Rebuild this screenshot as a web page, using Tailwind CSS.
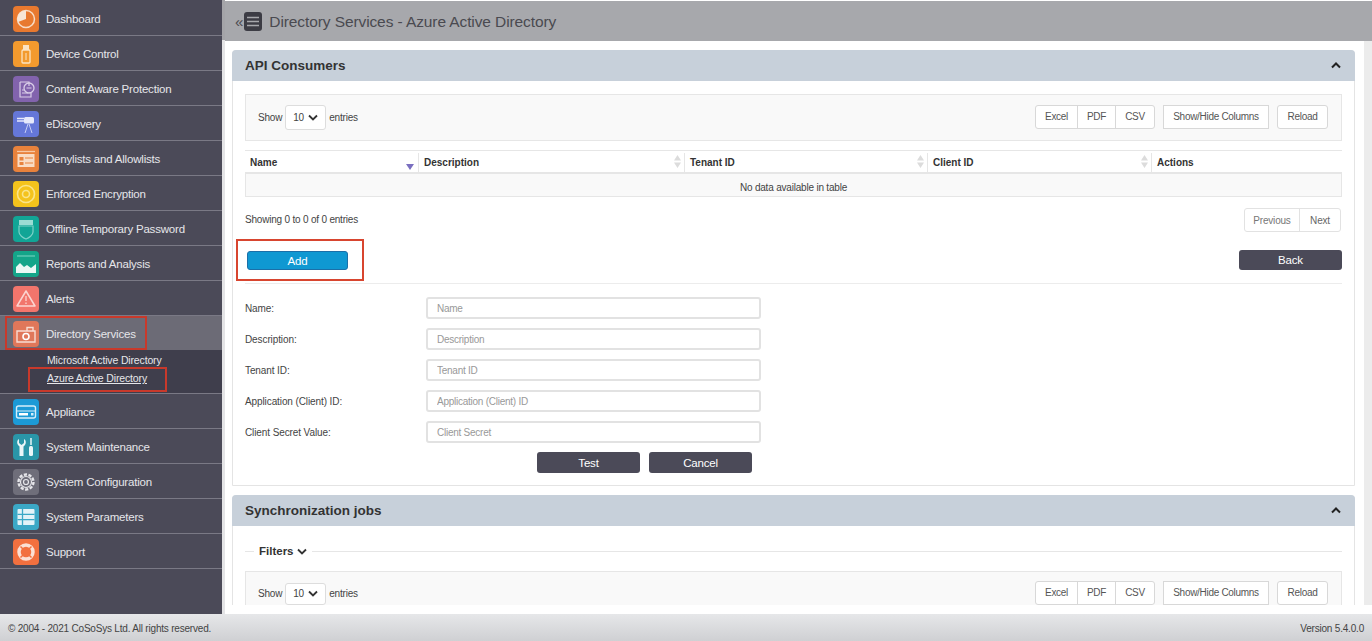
<!DOCTYPE html>
<html lang="en">
  <head>
    <meta charset="UTF-8" />
    <meta name="viewport" content="width=device-width, initial-scale=1.0" />
    <title>Directory Services - Azure Active Directory</title>
    <script src="https://cdn.jsdelivr.net/npm/@tailwindcss/browser@4"></script>
  </head>
  <body class="bg-white h-[641px] w-[1372px] overflow-hidden font-['Liberation_Sans',Arial,sans-serif] text-[#444]">
    <div class="flex flex-col h-[641px]">
      <div class="flex h-[614px]">
        <!-- sidebar -->
        <aside class="relative w-[225px] shrink-0 bg-[#4b4a58] pt-px border-r-[3px] border-[#e4e4e6] text-[11.500px] tracking-[-0.2px] text-[#e6e6ea] [&>a>span]:pt-[2px]">
          <div class="absolute right-[-3px] top-0 w-[3px] h-[40px] bg-[#a4a4a8]"></div>

          <a class="flex items-center h-[35px] pt-[2px] pl-[13px] gap-[7px] border-b border-[#7a7985]">
            <svg width="26" height="26" viewBox="0 0 26 26" class="shrink-0"><rect width="26" height="26" rx="4" fill="#e8792f"/><circle cx="13" cy="13" r="8.500" fill="none" stroke="#f7dcc6" stroke-width="1.500"/><path d="M13 13 L13 4.500 A8.500 8.500 0 0 0 5 16 Z" fill="#f7e6d6"/></svg>
            <span>Dashboard</span>
          </a>
          <a class="flex items-center h-[35px] pt-[2px] pl-[13px] gap-[7px] border-b border-[#7a7985]">
            <svg width="26" height="26" viewBox="0 0 26 26" class="shrink-0"><rect width="26" height="26" rx="4" fill="#f29a2e"/><rect x="10" y="4" width="6" height="5" fill="#fbe3c2"/><rect x="9" y="9" width="8" height="13" rx="1" fill="none" stroke="#fbe3c2" stroke-width="1.300"/><path d="M13 12v7" stroke="#fbe3c2"/></svg>
            <span>Device Control</span>
          </a>
          <a class="flex items-center h-[35px] pt-[2px] pl-[13px] gap-[7px] border-b border-[#7a7985]">
            <svg width="26" height="26" viewBox="0 0 26 26" class="shrink-0"><rect width="26" height="26" rx="4" fill="#8263ad"/><path d="M7 6h9v4M7 6v15h11v-4" fill="none" stroke="#d9cde8" stroke-width="1.200"/><circle cx="16" cy="12" r="5" fill="none" stroke="#d9cde8" stroke-width="1.300"/><path d="M13.500 12h5M9 14h3M9 17h6" stroke="#d9cde8"/></svg>
            <span>Content Aware Protection</span>
          </a>
          <a class="flex items-center h-[35px] pt-[2px] pl-[13px] gap-[7px] border-b border-[#7a7985]">
            <svg width="26" height="26" viewBox="0 0 26 26" class="shrink-0"><rect width="26" height="26" rx="4" fill="#6577d8"/><path d="M4 7.500h7M4 10h7" stroke="#e6e9fb" stroke-width="1.500"/><rect x="11" y="6" width="10" height="6.500" rx="1.500" fill="#e6e9fb"/><path d="M15 13l-3 9M16 13l3 9" stroke="#c6cdf4"/></svg>
            <span>eDiscovery</span>
          </a>
          <a class="flex items-center h-[35px] pt-[2px] pl-[13px] gap-[7px] border-b border-[#7a7985]">
            <svg width="26" height="26" viewBox="0 0 26 26" class="shrink-0"><rect width="26" height="26" rx="4" fill="#e8823c"/><path d="M4 5.500h18" stroke="#f6c9a6" stroke-width="1.300"/><rect x="4.500" y="8" width="17" height="13" fill="#f9dcc4"/><rect x="6.500" y="11" width="4" height="3.500" fill="#e8823c"/><rect x="6.500" y="16" width="4" height="3" fill="#e8823c"/><path d="M12 12h8M12 17h8" stroke="#e8823c"/></svg>
            <span>Denylists and Allowlists</span>
          </a>
          <a class="flex items-center h-[35px] pt-[2px] pl-[13px] gap-[7px] border-b border-[#7a7985]">
            <svg width="26" height="26" viewBox="0 0 26 26" class="shrink-0"><rect width="26" height="26" rx="4" fill="#f4c31c"/><circle cx="13" cy="13" r="8.500" fill="none" stroke="#fae48a" stroke-width="1.600"/><circle cx="13" cy="13" r="3.500" fill="none" stroke="#fae48a" stroke-width="1.600"/></svg>
            <span>Enforced Encryption</span>
          </a>
          <a class="flex items-center h-[35px] pt-[2px] pl-[13px] gap-[7px] border-b border-[#7a7985]">
            <svg width="26" height="26" viewBox="0 0 26 26" class="shrink-0"><rect width="26" height="26" rx="4" fill="#12a596"/><rect x="6" y="4" width="14" height="5" fill="#9adcd4"/><path d="M6 10h14v6c0 3-4 6-7 7-3-1-7-4-7-7z" fill="none" stroke="#7dd2c8" stroke-width="1.200"/></svg>
            <span>Offline Temporary Password</span>
          </a>
          <a class="flex items-center h-[35px] pt-[2px] pl-[13px] gap-[7px] border-b border-[#7a7985]">
            <svg width="26" height="26" viewBox="0 0 26 26" class="shrink-0"><rect width="26" height="26" rx="4" fill="#14a589"/><path d="M4 5h18" stroke="#7fd6c4"/><path d="M3 22v-6l4-4 4 4 3-2 4 3 5-4v9z" fill="#eaf8f4"/></svg>
            <span>Reports and Analysis</span>
          </a>
          <a class="flex items-center h-[35px] pt-[2px] pl-[13px] gap-[7px] border-b border-[#7a7985]">
            <svg width="26" height="26" viewBox="0 0 26 26" class="shrink-0"><rect width="26" height="26" rx="4" fill="#f2756c"/><path d="M13 5l9 15H4z" fill="none" stroke="#fbd5d1" stroke-width="1.500" stroke-linejoin="round"/><path d="M13 10v5M13 16.500v1.500" stroke="#fbd5d1" stroke-width="1.300"/></svg>
            <span>Alerts</span>
          </a>
          <a class="flex items-center h-[34px] pt-[2px] pl-[13px] gap-[7px] bg-[#6c6b76]">
            <svg width="26" height="26" viewBox="0 0 26 26" class="shrink-0"><rect width="26" height="26" rx="4" fill="#e0775a"/><path d="M4 10h18v11H4zM14 10V6.500h6V10" fill="none" stroke="#f8dcd2" stroke-width="1.400"/><circle cx="13" cy="15.500" r="3" fill="none" stroke="#fff" stroke-width="1.600"/></svg>
            <span>Directory Services</span>
          </a>
          <div class="h-[44px] bg-[#3f3e4c] pl-[47px] pt-[1px] text-[10.500px] tracking-[-0.15px] leading-[18px] border-b border-[#7a7985]">
            <a class="block h-[18px]">Microsoft Active Directory</a>
            <a class="block underline">Azure Active Directory</a>
          </div>
          <a class="flex items-center h-[35px] pt-[2px] pl-[13px] gap-[7px] border-b border-[#7a7985]">
            <svg width="26" height="26" viewBox="0 0 26 26" class="shrink-0"><rect width="26" height="26" rx="4" fill="#1c9ad6"/><rect x="3.500" y="7" width="19" height="12" rx="2" fill="none" stroke="#d5eefa" stroke-width="1.400"/><path d="M3.500 12h19" stroke="#d5eefa"/><rect x="6" y="14" width="9" height="2.500" fill="#fff"/><rect x="18" y="14" width="2.500" height="2.500" fill="#d5eefa"/></svg>
            <span>Appliance</span>
          </a>
          <a class="flex items-center h-[35px] pt-[2px] pl-[13px] gap-[7px] border-b border-[#7a7985]">
            <svg width="26" height="26" viewBox="0 0 26 26" class="shrink-0"><rect width="26" height="26" rx="4" fill="#2a96a8"/><path d="M6 5v4l2.500 2L11 9V5c2 1 2.500 4 1 6l-1.500 1.500V22h-4v-9.500L5 11C3.500 9 4 6 6 5z" fill="#eaf6f8"/><path d="M18 4v7" stroke="#eaf6f8" stroke-width="1.500"/><rect x="16" y="12" width="4" height="10" rx="1.500" fill="#eaf6f8"/></svg>
            <span>System Maintenance</span>
          </a>
          <a class="flex items-center h-[35px] pt-[2px] pl-[13px] gap-[7px] border-b border-[#7a7985]">
            <svg width="26" height="26" viewBox="0 0 26 26" class="shrink-0"><rect width="26" height="26" rx="4" fill="#6f6e7a"/><circle cx="13" cy="13" r="7.500" fill="none" stroke="#e6e6ea" stroke-width="2.400" stroke-dasharray="3.200 1.500"/><circle cx="13" cy="13" r="5.500" fill="none" stroke="#e6e6ea" stroke-width="1.200"/><circle cx="13" cy="13" r="2.500" fill="none" stroke="#e6e6ea" stroke-width="1.200"/></svg>
            <span>System Configuration</span>
          </a>
          <a class="flex items-center h-[35px] pt-[2px] pl-[13px] gap-[7px] border-b border-[#7a7985]">
            <svg width="26" height="26" viewBox="0 0 26 26" class="shrink-0"><rect width="26" height="26" rx="4" fill="#3ba8c6"/><rect x="4.500" y="5" width="17" height="16" rx="1" fill="#e3f3f8"/><path d="M4.500 10.300h17M4.500 15.600h17M9.500 5v16" stroke="#3ba8c6" stroke-width="1.300"/></svg>
            <span>System Parameters</span>
          </a>
          <a class="flex items-center h-[35px] pt-[2px] pl-[13px] gap-[7px] border-b border-[#7a7985]">
            <svg width="26" height="26" viewBox="0 0 26 26" class="shrink-0"><rect width="26" height="26" rx="4" fill="#f2703f"/><circle cx="13" cy="13" r="7" fill="none" stroke="#fbe0d4" stroke-width="3.500"/><path d="M7.500 7.500l3 3M18.500 7.500l-3 3M7.500 18.500l3-3M18.500 18.500l-3-3" stroke="#f2703f" stroke-width="1.500"/></svg>
            <span>Support</span>
          </a>

          <!-- highlights drawn on the screenshot -->
          <div class="absolute left-[5px] top-[316px] w-[142px] h-[34px] border-2 border-[#c8392b]"></div>
          <div class="absolute left-[28px] top-[367px] w-[139px] h-[25px] border-2 border-[#c8392b]"></div>
        </aside>

        <!-- main -->
        <div class="flex-1 min-w-0 flex flex-col">
          <header class="h-[40px] mt-px shrink-0 bg-[#a7a8ac] flex items-center pl-[10px] text-[#4a4a50]">
            <span class="text-[15px] leading-none mr-px">«</span>
            <svg width="18" height="19" viewBox="0 0 18 19" class="shrink-0"><rect width="18" height="19" rx="3" fill="#3c3c44"/><path d="M3 5.500h12M3 9.500h12M3 13.500h12" stroke="#a7a8ac" stroke-width="1.300"/></svg>
            <h1 class="ml-[7px] pt-[2px] text-[15.500px] tracking-[-0.1px] font-normal">Directory Services - Azure Active Directory</h1>
          </header>

          <div class="flex-1 min-h-0 flex">
            <div class="flex-1 min-w-0 h-[564px] overflow-hidden pl-[7px] pr-[9px] pt-[9px]">
              <!-- API Consumers -->
              <section class="relative h-[436px] border border-[#e4e4e4] rounded-t-[4px]">
                <div class="h-[31px] -mx-px -mt-px bg-[#c7d0da] rounded-t-[4px] flex items-center justify-between pl-[13px] pr-[14px]">
                  <h2 class="pt-[2px] text-[13.500px] font-bold text-[#333]">API Consumers</h2>
                  <svg width="10" height="7" viewBox="0 0 10 7"><path d="M1 5.500l4-4 4 4" fill="none" stroke="#222" stroke-width="2"/></svg>
                </div>
                <div class="px-[12px] pt-[13px]">
                  <div class="h-[47px] bg-[#f9f9f9] border border-[#e6e6e6] flex items-center justify-between pl-[12px] pr-[13px] text-[10px] tracking-[-0.2px]">
                    <div class="flex items-center gap-[3px]">
                      <span>Show</span>
                      <span class="w-[41px] h-[25px] bg-white border border-[#ddd] rounded-[3px] flex items-center justify-between px-[7px]">10<svg width="10" height="7" viewBox="0 0 10 7"><path d="M1 1.500l4 4 4-4" fill="none" stroke="#333" stroke-width="1.800"/></svg></span>
                      <span>entries</span>
                    </div>
                    <div class="flex items-center gap-[8px] -mt-[2px] text-[#555] tracking-[-0.3px]">
                      <div class="flex h-[24px] bg-white border border-[#d8d8d8] rounded-[3px]">
                        <span class="w-[42px] flex items-center justify-center border-r border-[#d8d8d8]">Excel</span>
                        <span class="w-[38px] flex items-center justify-center border-r border-[#d8d8d8]">PDF</span>
                        <span class="w-[38px] flex items-center justify-center">CSV</span>
                      </div>
                      <span class="w-[106px] h-[24px] bg-white border border-[#d8d8d8] flex items-center justify-center">Show/Hide Columns</span>
                      <span class="w-[51px] h-[24px] bg-white border border-[#d8d8d8] rounded-[3px] flex items-center justify-center">Reload</span>
                    </div>
                  </div>

                  <div class="mt-[9px] grid grid-cols-[174px_266px_243px_224px_190px] h-[24px] pt-[2px] border-t border-b-2 border-[#e6e6e6] text-[10px] font-bold text-[#333]">
                    <div class="relative flex items-center pl-[5px] border-r border-[#e6e6e6]">Name<span class="absolute right-[4px] bottom-[2px] w-0 h-0 border-x-[4px] border-x-transparent border-t-[6px] border-t-[#7a6fc0]"></span></div>
                    <div class="relative flex items-center pl-[5px] border-r border-[#e6e6e6]">Description<svg width="7" height="13" viewBox="0 0 7 13" class="absolute right-[3px] top-[2px]"><path d="M3.500 0L7 5.500H0zM3.500 13L0 7.500h7z" fill="#dcdcdc"/></svg></div>
                    <div class="relative flex items-center pl-[5px] border-r border-[#e6e6e6]">Tenant ID<svg width="7" height="13" viewBox="0 0 7 13" class="absolute right-[3px] top-[2px]"><path d="M3.500 0L7 5.500H0zM3.500 13L0 7.500h7z" fill="#dcdcdc"/></svg></div>
                    <div class="relative flex items-center pl-[5px] border-r border-[#e6e6e6]">Client ID<svg width="7" height="13" viewBox="0 0 7 13" class="absolute right-[3px] top-[2px]"><path d="M3.500 0L7 5.500H0zM3.500 13L0 7.500h7z" fill="#dcdcdc"/></svg></div>
                    <div class="flex items-center pl-[5px]">Actions</div>
                  </div>
                  <div class="h-[23px] pt-[4px] bg-[#f9f9f9] border border-t-0 border-[#e6e6e6] flex items-center justify-center text-[10px] tracking-[-0.2px]">No data available in table</div>

                  <div class="mt-[11px] h-[24px] flex items-center justify-between text-[10px] tracking-[-0.2px]">
                    <span class="pb-[2px]">Showing 0 to 0 of 0 entries</span>
                    <div class="flex h-[24px] bg-white border border-[#e2e2e2] rounded-[3px] mr-px text-[#666]">
                      <span class="w-[55px] flex items-center justify-center border-r border-[#e2e2e2] text-[#777]">Previous</span>
                      <span class="w-[40px] flex items-center justify-center">Next</span>
                    </div>
                  </div>

                  <div class="mt-[17px] h-[22px] flex items-center justify-between pl-[2px]">
                    <button class="w-[101px] h-[19px] pt-px bg-[#0f98d2] border border-[#1b6fa8] rounded-[3px] text-[11.500px] tracking-[-0.2px] text-white">Add</button>
                    <button class="w-[103px] h-[20px] pt-[2px] bg-[#4b4a58] rounded-[3px] text-[11.500px] tracking-[-0.2px] text-white">Back</button>
                  </div>
                  <div class="mt-[12px] border-t border-[#ececec]"></div>

                  <form class="mt-[13px] text-[10px] tracking-[-0.1px] text-[#444]">
                    <div class="grid grid-cols-[181px_335px] gap-y-[9px] items-center">
                      <label>Name:</label><input placeholder="Name" class="h-[22px] px-[9px] tracking-[-0.25px] border-2 border-[#e2e2e2] rounded-[3px] placeholder:text-[#999]" />
                      <label>Description:</label><input placeholder="Description" class="h-[22px] px-[9px] tracking-[-0.25px] border-2 border-[#e2e2e2] rounded-[3px] placeholder:text-[#999]" />
                      <label>Tenant ID:</label><input placeholder="Tenant ID" class="h-[22px] px-[9px] tracking-[-0.25px] border-2 border-[#e2e2e2] rounded-[3px] placeholder:text-[#999]" />
                      <label>Application (Client) ID:</label><input placeholder="Application (Client) ID" class="h-[22px] px-[9px] tracking-[-0.25px] border-2 border-[#e2e2e2] rounded-[3px] placeholder:text-[#999]" />
                      <label>Client Secret Value:</label><input placeholder="Client Secret" class="h-[22px] px-[9px] tracking-[-0.25px] border-2 border-[#e2e2e2] rounded-[3px] placeholder:text-[#999]" />
                    </div>
                    <div class="mt-[9px] ml-[292px] flex gap-[9px]">
                      <button type="button" class="w-[103px] h-[21px] pt-[2px] bg-[#4b4a58] rounded-[3px] text-[11.500px] tracking-[-0.2px] text-white">Test</button>
                      <button type="button" class="w-[103px] h-[21px] pt-[2px] bg-[#4b4a58] rounded-[3px] text-[11.500px] tracking-[-0.2px] text-white">Cancel</button>
                    </div>
                  </form>
                </div>

                <!-- highlight drawn on the screenshot -->
                <div class="absolute left-[3px] top-[188px] w-[128px] h-[42px] border-2 border-[#d8452f]"></div>
              </section>

              <!-- Synchronization jobs -->
              <section class="mt-[9px] h-[200px] border border-[#e4e4e4] rounded-t-[4px]">
                <div class="h-[31px] -mx-px -mt-px bg-[#c7d0da] rounded-t-[4px] flex items-center justify-between pl-[13px] pr-[14px]">
                  <h2 class="pt-[2px] text-[13.500px] font-bold text-[#333]">Synchronization jobs</h2>
                  <svg width="10" height="7" viewBox="0 0 10 7"><path d="M1 5.500l4-4 4 4" fill="none" stroke="#222" stroke-width="2"/></svg>
                </div>
                <div class="px-[12px] pt-[15px]">
                  <div class="flex items-center h-[20px] text-[11.500px] font-bold text-[#333]">
                    <span class="w-[9px] border-t border-[#e6e6e6]"></span>
                    <span class="ml-[5px] pt-[2px]">Filters</span>
                    <svg width="10" height="7" viewBox="0 0 10 7" class="ml-[3px]"><path d="M1 1.500l4 4 4-4" fill="none" stroke="#333" stroke-width="1.800"/></svg>
                    <span class="flex-1 ml-[5px] border-t border-[#e6e6e6]"></span>
                  </div>
                  <div class="mt-[10px] h-[47px] pb-[2px] bg-[#f9f9f9] border border-[#e6e6e6] flex items-center justify-between pl-[12px] pr-[13px] text-[10px] tracking-[-0.2px]">
                    <div class="flex items-center gap-[3px]">
                      <span>Show</span>
                      <span class="w-[41px] h-[22px] bg-white border border-[#ddd] rounded-[3px] flex items-center justify-between px-[7px]">10<svg width="10" height="7" viewBox="0 0 10 7"><path d="M1 1.500l4 4 4-4" fill="none" stroke="#333" stroke-width="1.800"/></svg></span>
                      <span>entries</span>
                    </div>
                    <div class="flex items-center gap-[8px] -mt-[2px] text-[#555] tracking-[-0.3px]">
                      <div class="flex h-[24px] bg-white border border-[#d8d8d8] rounded-[3px]">
                        <span class="w-[42px] flex items-center justify-center border-r border-[#d8d8d8]">Excel</span>
                        <span class="w-[38px] flex items-center justify-center border-r border-[#d8d8d8]">PDF</span>
                        <span class="w-[38px] flex items-center justify-center">CSV</span>
                      </div>
                      <span class="w-[106px] h-[24px] bg-white border border-[#d8d8d8] flex items-center justify-center">Show/Hide Columns</span>
                      <span class="w-[51px] h-[24px] bg-white border border-[#d8d8d8] rounded-[3px] flex items-center justify-center">Reload</span>
                    </div>
                  </div>
                </div>
              </section>
            </div>
            <!-- page scrollbar track -->
            <div class="w-[8px] h-[564px] shrink-0 bg-[#ececec]"></div>
          </div>
        </div>
      </div>

      <footer class="h-[27px] pt-[2px] shrink-0 bg-gradient-to-b from-[#e6e7e9] to-[#cfd0d3] flex items-center justify-between pl-[8px] pr-[8px] text-[10px] tracking-[-0.2px] text-[#444]">
        <span>© 2004 - 2021 CoSoSys Ltd. All rights reserved.</span>
        <span>Version 5.4.0.0</span>
      </footer>
    </div>
  </body>
</html>
